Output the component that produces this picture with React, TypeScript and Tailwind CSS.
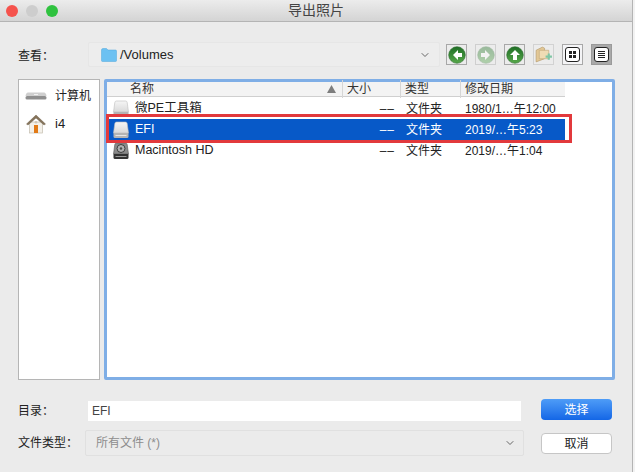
import { ChevronDown } from "lucide-react";

const rows = [
  { name: "微PE工具箱", date: "1980/1…午12:00", disk: "plain" },
  { name: "EFI", date: "2019/…午5:23", disk: "plain", selected: true },
  { name: "Macintosh HD", date: "2019/…午1:04", disk: "dark" },
];

function DiskIcon({ dark }: { dark?: boolean }) {
  return (
    <svg width="16" height="18" viewBox="0 0 16 18" className="shrink-0">
      <defs>
        <linearGradient id="disk-body" x1="0" y1="0" x2="0" y2="1">
          <stop offset="0" stopColor="#f6f6f6" />
          <stop offset="1" stopColor="#d9d9d9" />
        </linearGradient>
      </defs>
      <path d="M3.500 1h9q1.500 0 1.700 1.500L15.500 12h-15l1.300-9.500Q2 1 3.500 1z" fill={dark ? "#8a8a8a" : "url(#disk-body)"} stroke={dark ? "#555" : "#bdbdbd"} strokeWidth="0.600" />
      <path d="M0.500 12h15v3.500q0 1.500-1.500 1.500H2q-1.500 0-1.500-1.500z" fill={dark ? "#333" : "#b4b4b4"} />
      {dark && <circle cx="8" cy="6.500" r="4" fill="#b0b0b0" stroke="#3d3d3d" />}
      {dark && <circle cx="8" cy="6.500" r="1.200" fill="#4a4a4a" />}
      <rect x="2.500" y="14" width="11" height="1" fill={dark ? "#999" : "#e6e6e6"} />
    </svg>
  );
}

function MiniIcon() {
  return (
    <svg width="22" height="8" viewBox="0 0 22 8">
      <path d="M3 0.500h16q2 0 2.500 3.500H.5Q1 .5 3 .5z" fill="#cfcfcf" />
      <rect x="0.500" y="4" width="21" height="3.500" rx="1.500" fill="#8f8f8f" />
      <rect x="9" y="2" width="4" height="1" fill="#f2f2f2" />
    </svg>
  );
}

function HomeIcon() {
  return (
    <svg width="20" height="20" viewBox="0 0 20 20">
      <rect x="3.500" y="8" width="13" height="11" fill="#f4f1ea" stroke="#c4bcae" strokeWidth="0.700" />
      <path d="M0.500 10 10 1l9.500 9-1.500 1L10 4 2 11z" fill="#85735a" stroke="#66573f" strokeWidth="0.400" />
      <rect x="8" y="11" width="4" height="8" fill="#e27a17" />
      <circle cx="10" cy="8.200" r="1.300" fill="#cfc6b6" />
    </svg>
  );
}

function ArrowButton({ dir, faded }: { dir: "left" | "right" | "up"; faded?: boolean }) {
  const arrows = {
    left: "M10 4 5 9l5 5v-3h4V7h-4z",
    right: "M8 4l5 5-5 5v-3H4V7h4z",
    up: "M9 4 4 9h3v5h4V9h3z",
  };
  return (
    <button className={`flex size-[21px] items-center justify-center border ${faded ? "border-[#cfcfcf]" : "border-[#a8a8a8]"} bg-[#ececec]`}>
      <svg width="18" height="18" viewBox="0 0 18 18" className={faded ? "opacity-40" : ""}>
        <defs>
          <linearGradient id={`ball-${dir}`} x1="0" y1="0" x2="0" y2="1">
            <stop offset="0" stopColor="#1f6f26" />
            <stop offset="1" stopColor="#57a84a" />
          </linearGradient>
        </defs>
        <circle cx="9" cy="9" r="8.300" fill={`url(#ball-${dir})`} stroke="#2b6a2d" strokeWidth="0.600" />
        <path d={arrows[dir]} fill="#fff" />
      </svg>
    </button>
  );
}

function NewFolderButton() {
  return (
    <button className="flex size-[21px] items-center justify-center border border-[#d2d2d2] bg-[#ececec]">
      <svg width="19" height="19" viewBox="0 0 18 18">
        <path d="M2 5l6-3 2 1v10l-8 3z" fill="#e3c896" stroke="#b39a6c" strokeWidth="0.600" />
        <path d="M5 5h9v8H5z" fill="#efdcb4" stroke="#bfa677" strokeWidth="0.600" />
        <path d="M11 10h2V8h2v2h2v2h-2v2h-2v-2h-2z" fill="#7fc6a4" />
      </svg>
    </button>
  );
}

function GridButton() {
  return (
    <button className="flex size-[21px] items-center justify-center border border-[#a8a8a8] bg-[#f4f4f6]">
      <span className="grid size-[15px] grid-cols-[3px_3px] place-content-center gap-[1px] rounded-[3px] border-[1.500px] border-[#222] bg-white">
        <i className="size-[3px] bg-[#222]" />
        <i className="size-[3px] bg-[#222]" />
        <i className="size-[3px] bg-[#222]" />
        <i className="size-[3px] bg-[#222]" />
      </span>
    </button>
  );
}

function ListButton() {
  return (
    <button className="flex size-[21px] items-center justify-center border border-[#9a9a9a] bg-[#a9a9a9]">
      <span className="flex size-[15px] flex-col items-center justify-center gap-[1px] rounded-[3px] border-[1.500px] border-[#222] bg-white">
        <i className="h-px w-[7px] bg-[#222]" />
        <i className="h-px w-[7px] bg-[#222]" />
        <i className="h-px w-[7px] bg-[#222]" />
        <i className="h-px w-[7px] bg-[#222]" />
      </span>
    </button>
  );
}

export default function App() {
  return (
    <div className="flex h-[472px] w-[635px] bg-[#f2f2f2]">
      <div className="flex h-full w-[633px] flex-col overflow-hidden border-r border-r-[#b4b4b4] bg-[#ebebeb] text-[12px] text-[#222] font-['Liberation_Sans','Noto_Sans_CJK_SC',sans-serif]">
        {/* title bar */}
        <div className="relative flex h-[22px] shrink-0 items-center justify-center border-b border-[#b4b4b4] bg-gradient-to-b from-[#ececec] to-[#d4d4d4]">
          <div className="absolute left-[6px] top-[5px] flex gap-[8px]">
            <span className="size-[12px] rounded-full bg-[#f5524c]" />
            <span className="size-[12px] rounded-full bg-[#cdcdcd]" />
            <span className="size-[12px] rounded-full bg-[#2fc23f]" />
          </div>
          <span className="text-[14px] text-[#444]">导出照片</span>
        </div>

        <div className="flex min-h-0 flex-1 flex-col pl-[18px]">
          {/* path row */}
          <div className="mt-[20px] flex h-[25px] items-center">
            <span className="w-[70px] pt-[2px]">查看：</span>
            <div className="flex h-[25px] w-[352px] items-center rounded-[2px] border border-[#e6e6e6] bg-[#ededed] pl-[12px] pr-[8px] text-[13px]">
              <svg width="16" height="14" viewBox="0 0 16 14" className="mr-[3px]">
                <path d="M0.500 2q0-1.500 1.500-1.500h3.500L7 2h7.500q1 0 1 1v9.500q0 1-1 1h-13q-1 0-1-1z" fill="#6cc1f2" stroke="#4fa6dc" strokeWidth="0.500" />
              </svg>
              <span className="flex-1">/Volumes</span>
              <ChevronDown size={12} className="text-[#666]" />
            </div>
            <div className="ml-[6px] flex gap-[8px]">
              <ArrowButton dir="left" />
              <ArrowButton dir="right" faded />
              <ArrowButton dir="up" />
              <NewFolderButton />
              <GridButton />
              <ListButton />
            </div>
          </div>

          {/* places + file list */}
          <div className="mt-[12px] flex h-[301px] w-[597px] gap-[4px]">
            <div className="flex w-[82px] flex-col border border-[#b5b5b5] bg-white pl-[6px] pt-[8px]">
              <div className="flex h-[16px] items-center gap-[8px]">
                <MiniIcon />
                <span>计算机</span>
              </div>
              <div className="mt-[10px] flex h-[20px] items-center gap-[9px] pl-[1px]">
                <HomeIcon />
                <span className="text-[13px]">i4</span>
              </div>
            </div>

            <div className="relative flex-1 rounded-[2px] border-[3px] border-[#7faee6] bg-white">
              <div className="flex h-[15px] w-[458px] items-center border-b border-[#cfcfcf] bg-[#f3f3f3] text-[#333]">
                <span className="w-[235px] pl-[23px]">名称</span>
                <svg width="9" height="8" viewBox="0 0 9 8" className="-ml-[15px] mr-[6px]">
                  <path d="M4.500 0 9 8H0z" fill="#7d7d7d" />
                </svg>
                <span className="w-[58px] border-l border-[#d6d6d6] pl-[4px]">大小</span>
                <span className="w-[60px] border-l border-[#d6d6d6] pl-[4px]">类型</span>
                <span className="border-l border-[#d6d6d6] pl-[4px]">修改日期</span>
              </div>
              <div className="w-[458px] pt-px">
                {rows.map((row) => (
                  <div
                    key={row.name}
                    className={`flex h-[21px] items-center ${row.selected ? "bg-[#0759c8] text-white" : ""}`}
                  >
                    <span className="flex w-[234px] items-center gap-[5px] pl-[6px] text-[12.500px]">
                      <DiskIcon dark={row.disk === "dark"} />
                      <span className="pl-px">{row.name}</span>
                    </span>
                    <span className="w-[58px] pr-[4px] text-right tracking-[1px]">––</span>
                    <span className="w-[66px] pl-[7px]">文件夹</span>
                    <span>{row.date}</span>
                  </div>
                ))}
              </div>
              {/* red annotation around the selected row */}
              <div className="absolute left-[-1px] top-[32px] h-[29px] w-[466px] border-[3px] border-[#e2393c]" />
            </div>
          </div>

          {/* directory + filter */}
          <div className="mt-[19px] flex items-start">
            <div className="flex flex-col">
              <div className="mt-px flex h-[21px] items-center">
                <span className="w-[70px]">目录：</span>
                <div className="flex h-[20px] w-[433px] items-center bg-white pl-[4px] text-[#444]">EFI</div>
              </div>
              <div className="mt-[9px] flex h-[26px] items-center">
                <span className="w-[67px]">文件类型：</span>
                <div className="flex h-[26px] w-[439px] items-center justify-between rounded-[2px] border border-[#e0e0e0] bg-[#ebebeb] pl-[10px] pr-[7px] text-[#8d8d8d]">
                  <span>所有文件 (*)</span>
                  <ChevronDown size={12} className="text-[#666]" />
                </div>
              </div>
            </div>
            <div className="ml-[17px] flex w-[71px] flex-col">
              <button className="h-[21px] rounded-[4px] bg-gradient-to-b from-[#4e9cf7] to-[#1366e6] text-white">选择</button>
              <button className="mt-[13px] h-[21px] rounded-[4px] border border-[#c6c6c6] bg-white text-[#222]">取消</button>
            </div>
          </div>
        </div>
      </div>
    </div>
  );
}
